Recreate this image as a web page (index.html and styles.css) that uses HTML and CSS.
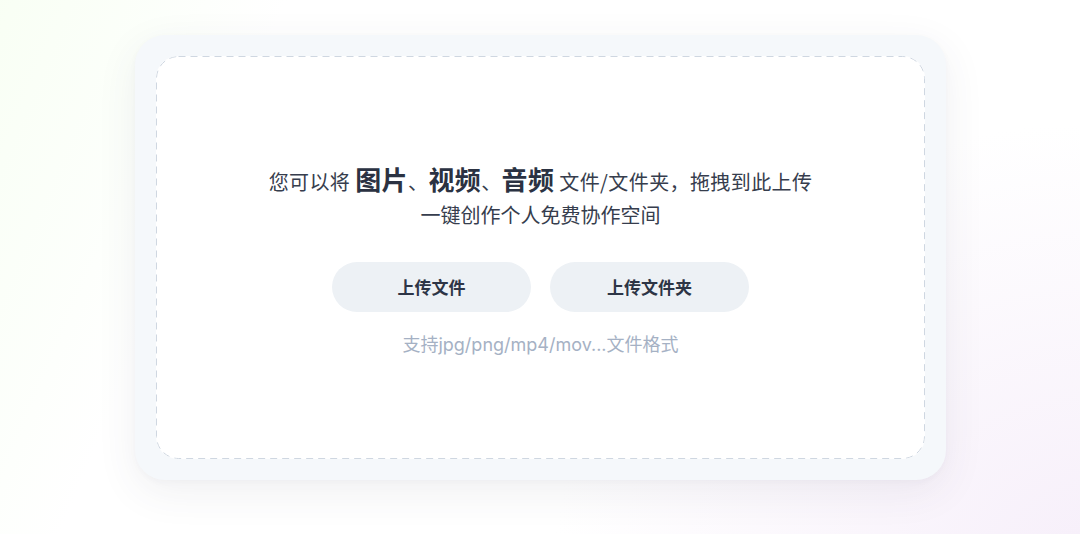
FILE: index.html
```html
<!DOCTYPE html>
<html lang="zh-CN">
<head>
<meta charset="utf-8">
<title>上传</title>
<link rel="stylesheet" href="styles.css">
</head>
<body>
<main class="page">
  <section class="card">
    <div class="dropzone">
      <p class="lead">您可以将 <strong>图片</strong>、<strong>视频</strong>、<strong>音频</strong> 文件/文件夹，拖拽到此上传</p>
      <p class="sub">一键创作个人免费协作空间</p>
      <div class="actions">
        <button class="btn" type="button">上传文件</button>
        <button class="btn" type="button">上传文件夹</button>
      </div>
      <p class="hint">支持jpg/png/mp4/mov...文件格式</p>
    </div>
  </section>
</main>
</body>
</html>
```

FILE: styles.css
```css
* { box-sizing: border-box; }
html, body { margin: 0; padding: 0; }
body {
  width: 1080px;
  height: 534px;
  overflow: hidden;
  font-family: "Noto Sans CJK SC", "Noto Sans", sans-serif;
  color: #333a4a;
  background:
    linear-gradient(113deg, rgba(246, 255, 240, 0.7) 0%, rgba(249, 255, 246, 0.55) 12%, rgba(255,255,255,0) 22%),
    radial-gradient(ellipse 700px 560px at 1100px 560px, rgba(245, 236, 249, 0.85), rgba(255,255,255,0) 78%),
    #ffffff;
}
.page {
  height: 534px;
  display: flex;
  justify-content: center;
  padding-top: 35px;
  padding-left: 1px;
}
.card {
  width: 811px;
  height: 445px;
  background: #f5f8fb;
  border-radius: 30px;
  padding: 21px;
  box-shadow: 0 12px 40px rgba(60, 60, 90, 0.08), 0 2px 6px rgba(60,60,90,0.03);
}
.dropzone {
  height: 100%;
  background-color: #ffffff;
  background-image: url("data:image/svg+xml,%3Csvg xmlns='http://www.w3.org/2000/svg' width='100%25' height='100%25'%3E%3Crect x='0.5' y='0.5' width='99.87%25' height='99.75%25' rx='22' ry='22' fill='none' stroke='%23CFD7E1' stroke-width='1' stroke-dasharray='7 5'/%3E%3C/svg%3E");
  border-radius: 22px;
  display: flex;
  flex-direction: column;
  align-items: center;
  justify-content: center;
  padding-top: 5px;
}
.lead {
  margin: 0;
  font-size: 20px;
  line-height: 34px;
  letter-spacing: 0.4px;
  color: #363d4d;
}
.lead strong {
  font-size: 26px;
  font-weight: 700;
  color: #2b3242;
}
.sub {
  margin: 0;
  font-size: 20px;
  line-height: 32px;
  color: #363d4d;
}
.actions {
  display: flex;
  gap: 19px;
  margin-top: 31px;
}
.btn {
  width: 199px;
  height: 50px;
  border: none;
  border-radius: 25px;
  background: #edf1f5;
  font-family: inherit;
  font-size: 17px;
  font-weight: 700;
  color: #2d3546;
  cursor: pointer;
}
.hint {
  margin: 19px 0 0;
  font-family: Inter, "Noto Sans CJK SC", sans-serif;
  font-size: 18px;
  line-height: 28px;
  color: #a5b1c4;
}
```
